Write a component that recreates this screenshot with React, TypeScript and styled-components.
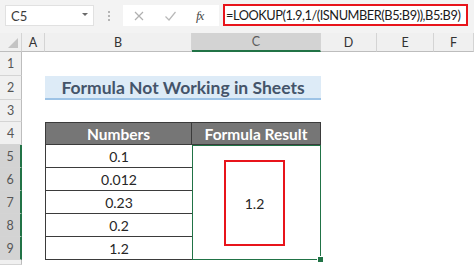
import React from 'react';
import styled, { createGlobalStyle } from 'styled-components';

const GlobalStyle = createGlobalStyle`
  html, body {
    margin: 0;
    padding: 0;
    background: #ffffff;
    overflow: hidden;
  }
  body {
    font-family: Lato, "Open Sans", "Liberation Sans", sans-serif;
  }
`;

const Window = styled.div`
  width: 474px;
  height: 265px;
  display: flex;
  flex-direction: column;
  background: #ffffff;
  overflow: hidden;
`;

const FormulaBar = styled.div`
  height: 33px;
  flex-shrink: 0;
  display: flex;
  align-items: flex-start;
  background: #f3f3f3;
  padding: 4px 6px 0 5px;
  box-sizing: border-box;
`;

const NameBox = styled.div`
  width: 89px;
  height: 21px;
  margin-top: 1px;
  box-sizing: border-box;
  background: #ffffff;
  border: 1px solid #e1e1e1;
  display: flex;
  align-items: center;
  justify-content: space-between;
  padding: 0 5px 0 5px;
  font-size: 13px;
  color: #3a3a3a;
`;

const DropArrow = styled.span`
  width: 0;
  height: 0;
  border-left: 3px solid transparent;
  border-right: 3px solid transparent;
  border-top: 3px solid #6a6a6a;
  margin-bottom: 2px;
`;

const Grip = styled.div`
  width: 29px;
  display: flex;
  flex-direction: column;
  align-items: center;
  gap: 2px;
  padding-top: 7px;

  span {
    width: 2px;
    height: 2px;
    background: #b5b5b5;
  }
`;

const Buttons = styled.div`
  width: 96px;
  height: 21px;
  margin-top: 1px;
  box-sizing: border-box;
  background: #ffffff;
  display: flex;
  align-items: center;
  gap: 19px;
  padding: 0 0 0 10px;
`;

const Fx = styled.span`
  font-family: "Liberation Serif", "DejaVu Serif", serif;
  font-style: italic;
  font-size: 13px;
  color: #4a4a4a;
  letter-spacing: -1px;
`;

const FormulaInput = styled.div`
  margin-left: 4px;
  width: 245px;
  height: 22px;
  box-sizing: border-box;
  border: 2px solid #e8141b;
  background: #ffffff;
  display: flex;
  align-items: center;
  padding-left: 1px;
  font-size: 12.8px;
  letter-spacing: -0.45px;
  color: #1a1a1a;
  white-space: nowrap;
  overflow: hidden;
`;

const Sheet = styled.div`
  flex: 1;
  display: grid;
  grid-template-columns: 22px 23px 147px 129px 56px 57px 1fr;
  grid-template-rows: 19px 24px 24px 22px 23px 23px 23px 23px 23px 23px 1fr;
  background: #ffffff;
`;

const Corner = styled.div`
  grid-area: 1 / 1;
  background: #f0f0f0;
  border-right: 1px solid #d4d4d4;
  border-bottom: 1px solid #bdbdbd;
  position: relative;
  box-sizing: border-box;

  &::after {
    content: '';
    position: absolute;
    right: 3px;
    bottom: 3px;
    border-left: 10px solid transparent;
    border-bottom: 10px solid #c4c4c4;
  }
`;

const ColHead = styled.div<{ $col: number; $active?: boolean }>`
  grid-area: 1 / ${p => p.$col};
  box-sizing: border-box;
  background: ${p => (p.$active ? '#d3d3d3' : '#f0f0f0')};
  border-right: 1px solid #d4d4d4;
  border-bottom: ${p => (p.$active ? '2px solid #217346' : '1px solid #bdbdbd')};
  display: flex;
  align-items: center;
  justify-content: center;
  font-size: 12.5px;
  color: ${p => (p.$active ? '#5c5c5c' : '#333333')};
`;

const RowHead = styled.div<{ $row: number; $active?: boolean }>`
  grid-area: ${p => p.$row} / 1;
  box-sizing: border-box;
  background: ${p => (p.$active ? '#d3d3d3' : '#f0f0f0')};
  border-bottom: 1px solid #d4d4d4;
  border-right: ${p => (p.$active ? '2px solid #217346' : '1px solid #bdbdbd')};
  display: flex;
  align-items: center;
  justify-content: center;
  font-size: 12.5px;
  color: #555555;
`;

const Title = styled.div`
  grid-area: 3 / 3 / 4 / 5;
  background: #ddebf7;
  border-bottom: 2px solid #9dc3e6;
  display: flex;
  align-items: center;
  justify-content: center;
  font-weight: 700;
  font-size: 17.5px;
  color: #44546a;
`;

const HeadCell = styled.div<{ $col: number }>`
  grid-area: 5 / ${p => p.$col};
  background: #767676;
  border: 1px solid #3b3b3b;
  border-left-width: ${p => (p.$col === 3 ? '1px' : '0')};
  display: flex;
  align-items: center;
  justify-content: center;
  font-weight: 700;
  font-size: 15.5px;
  color: #ffffff;
`;

const NumCell = styled.div<{ $row: number }>`
  grid-area: ${p => p.$row} / 3;
  border: 1px solid #3b3b3b;
  border-top: 0;
  border-right: 0;
  display: flex;
  align-items: center;
  justify-content: center;
  font-size: 14px;
  color: #262626;
`;

const ResultCell = styled.div`
  grid-area: 6 / 4 / 11 / 5;
  position: relative;
  border: 1.5px solid #217346;
  display: flex;
  align-items: center;
  justify-content: center;
`;

const FillHandle = styled.span`
  position: absolute;
  right: -4px;
  bottom: -4px;
  width: 5px;
  height: 5px;
  background: #217346;
  border: 1px solid #ffffff;
`;

const Highlight = styled.div`
  width: 61px;
  height: 86px;
  margin-left: -4px;
  margin-top: 1px;
  box-sizing: border-box;
  border: 2.5px solid #e8141b;
  display: flex;
  align-items: center;
  justify-content: center;
  font-size: 14px;
  color: #262626;
`;

const columns = ['A', 'B', 'C', 'D', 'E', 'F'];
const numbers = ['0.1', '0.012', '0.23', '0.2', '1.2'];

const App: React.FC = () => {
  return (
    <>
      <GlobalStyle />
      <Window>
        <FormulaBar>
          <NameBox>
            C5
            <DropArrow />
          </NameBox>
          <Grip>
            <span />
            <span />
            <span />
          </Grip>
          <Buttons>
            <svg width="12" height="12" viewBox="0 0 12 12">
              <path d="M2 2 L10 10 M10 2 L2 10" stroke="#b0b0b0" strokeWidth="1.2" fill="none" />
            </svg>
            <svg width="13" height="12" viewBox="0 0 13 12">
              <path d="M1.5 6.5 L5 10 L11.5 2" stroke="#b8b8b8" strokeWidth="1.2" fill="none" />
            </svg>
            <Fx>fx</Fx>
          </Buttons>
          <FormulaInput>=LOOKUP(1.9,1/(ISNUMBER(B5:B9)),B5:B9)</FormulaInput>
        </FormulaBar>

        <Sheet>
          <Corner />
          {columns.map((c, i) => (
            <ColHead key={c} $col={i + 2} $active={c === 'C'}>
              {c}
            </ColHead>
          ))}
          {Array.from({ length: 10 }, (_, i) => (
            <RowHead key={i} $row={i + 2} $active={i >= 4 && i <= 8}>
              {i < 9 ? i + 1 : ''}
            </RowHead>
          ))}
          <Title>Formula Not Working in Sheets</Title>
          <HeadCell $col={3}>Numbers</HeadCell>
          <HeadCell $col={4}>Formula Result</HeadCell>
          {numbers.map((n, i) => (
            <NumCell key={i} $row={i + 6}>
              {n}
            </NumCell>
          ))}
          <ResultCell>
            <Highlight>1.2</Highlight>
            <FillHandle />
          </ResultCell>
        </Sheet>
      </Window>
    </>
  );
};

export default App;
